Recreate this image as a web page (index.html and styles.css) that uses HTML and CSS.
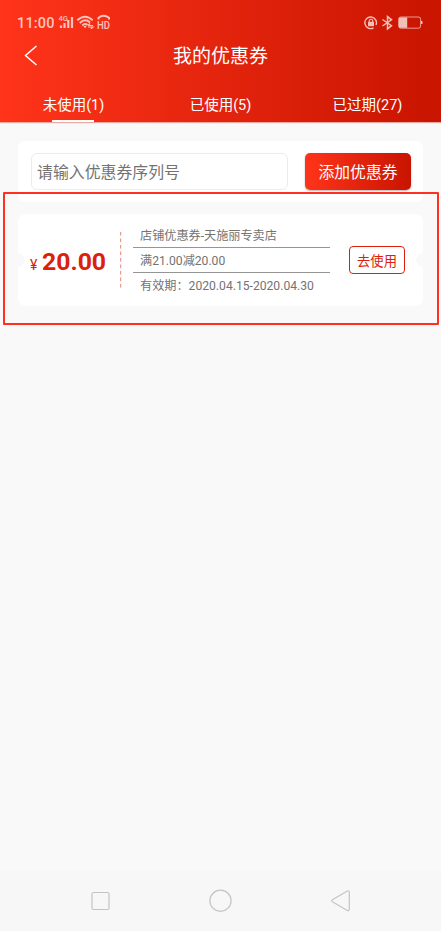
FILE: index.html
```html
<!DOCTYPE html>
<html lang="zh-CN">
<head>
<meta charset="utf-8">
<title>我的优惠券</title>
<link rel="stylesheet" href="styles.css">
</head>
<body>
<div class="screen">
  <header class="header">
    <div class="status">
      <span class="time">11:00</span>
      <svg class="signal" width="54" height="20" viewBox="0 0 54 20" fill="none" stroke="currentColor">
        <text class="network" x="0.500" y="8">4G</text>
        <path d="M3 15v-2.500M6.500 15v-5M10.300 15V7M14 15V4" stroke-width="2.200"/>
        <path d="M19.300 7.300Q27 0 34.700 7.300M21.800 10Q27 5 32 9.500M24.300 12.500Q27 9.500 29.500 12" stroke-width="1.900"/>
        <path d="M25.200 12.800h3.600L27 15.300z" fill="currentColor" stroke="none"/>
        <path d="M30 12.500h5M32 10.500l-2 2M30 14h5l-2 1.800" stroke-width="1.200"/>
        <path d="M40.500 6.500V4.800Q45.500.8 51 4.800v1.700" stroke-width="2"/>
        <text class="hd" x="39" y="15.800" textLength="13" lengthAdjust="spacingAndGlyphs">HD</text>
      </svg>
      <svg class="power" width="60" height="16" viewBox="0 0 60 16" fill="none" stroke="currentColor">
        <path d="M9.500 12.800A5.800 5.800 0 1 1 12 10" stroke-width="1.400"/>
        <path d="M4 6.800h6v4.400H4z" fill="currentColor" stroke="none"/>
        <path d="M5.300 7V5.300q1.700-2.200 3.400 0V7" stroke-width="1.100"/>
        <path d="M18.500 4.500l9 6.200-4 3.200V1.600l4 3.200-9 6.200" stroke-width="1.500"/>
        <rect x="34.600" y="2" width="22" height="11.200" rx="2.200" stroke-width=".8"/>
        <path d="M36.500 2.500h6.700v10.200h-6.700q-1.500 0-1.500-1.500V4q0-1.500 1.500-1.500z" fill="currentColor" stroke="none"/>
        <path d="M57.700 6v3" stroke-width="1.500"/>
      </svg>
    </div>
    <div class="titlebar">
      <svg class="back" width="14" height="22" viewBox="0 0 14 22"><path d="M12.500 1L1.500 10.500l11 9.500" fill="none" stroke="currentColor" stroke-width="1.500"/></svg>
      <h1 class="title">我的优惠券</h1>
    </div>
    <nav class="tabs">
      <a class="tab active">未使用(1)</a>
      <a class="tab">已使用(5)</a>
      <a class="tab">已过期(27)</a>
    </nav>
  </header>
  <main class="content">
    <section class="search">
      <div class="field">请输入优惠券序列号</div>
      <button class="add">添加优惠券</button>
    </section>
    <section class="coupon">
      <div class="amount"><span class="yen">¥</span><strong class="value">20.00</strong></div>
      <svg class="divider" width="2" height="56" viewBox="0 0 2 56"><path d="M.7 0v56" stroke="#e58477" stroke-width="1" stroke-dasharray="3.600 2.900"/></svg>
      <div class="details">
        <div class="line">店铺优惠券-天施丽专卖店</div>
        <div class="line">满21.00减20.00</div>
        <div class="line">有效期：2020.04.15-2020.04.30</div>
      </div>
      <button class="use">去使用</button>
    </section>
  </main>
  <footer class="navbar">
    <svg width="24" height="24" viewBox="0 0 24 24"><rect x="4" y="3.500" width="17" height="17" rx="1.500"/></svg>
    <svg width="24" height="24" viewBox="0 0 24 24"><circle cx="11.500" cy="11.700" r="10.600"/></svg>
    <svg width="24" height="24" viewBox="0 0 24 24"><path d="M3.400 10.700L18.300 2q2-.8 2 1.200v17q0 2-2 1.200L3.400 12.700q-1.500-1 0-2z"/></svg>
  </footer>
  <div class="highlight"></div>
</div>
</body>
</html>
```

FILE: styles.css
```css
* { box-sizing: border-box; }
body { margin: 0; background: #f9f9f9; font-family: Roboto, "Noto Sans CJK SC", sans-serif; }
button { font: inherit; margin: 0; padding: 0; }
.screen { position: relative; display: flex; flex-direction: column; width: 441px; height: 931px; overflow: hidden; }
.header { height: 122px; color: #fff; background: linear-gradient(90deg, #ff341a, #c81400); box-shadow: 0 1px 1px rgba(200, 20, 0, .35); }
.status { display: flex; align-items: center; height: 40px; padding: 6px 17px 0; color: rgba(255, 255, 255, .72); }
.time { width: 41px; padding-top: 1px; font-size: 14.500px; line-height: 18px; letter-spacing: .15px; font-weight: 500; }
.signal { margin-top: -1px; overflow: visible; }
.network { font-size: 7.500px; font-weight: 500; fill: currentColor; stroke: none; }
.hd { font-size: 11.500px; font-weight: 500; fill: currentColor; stroke: none; }
.power { margin-left: auto; margin-top: -1px; }
.titlebar { display: grid; grid-template-columns: 60px 1fr 60px; align-items: center; height: 32px; }
.back { margin-left: 24px; }
.title { margin: 0; padding-top: 2px; text-align: center; font-size: 19px; line-height: 28px; font-weight: 400; }
.tabs { display: grid; grid-template-columns: repeat(3, 1fr); height: 50px; }
.tab { display: flex; flex-direction: column; align-items: center; justify-content: space-between; padding-top: 23px; font-size: 14.500px; line-height: 21px; }
.active::after { content: ""; width: 42px; height: 2px; margin-right: 1px; background: #fff; }
.content { flex: 1; padding: 19px 18px 0; }
.search { display: flex; justify-content: space-between; height: 61px; padding: 12px 12px 12px 13px; background: #fff; border-radius: 7px; }
.field { width: 257px; height: 37px; padding-left: 5px; border: 1px solid #ececec; border-radius: 6px; color: #737373; font-size: 15.900px; line-height: 37px; }
.add { width: 106px; height: 37px; border: 0; border-radius: 5px; color: #fff; background: linear-gradient(90deg, #ff341a, #c81400); box-shadow: 0 1px 2px rgba(0, 0, 0, .3); font-size: 15.800px; }
.coupon { display: flex; align-items: center; height: 92px; margin-top: 12px; padding-left: 12px; border-radius: 7px; background: radial-gradient(circle at 0 50%, #f9f9f9 6.500px, transparent 7px), radial-gradient(circle at 100% 50%, #f9f9f9 6.500px, transparent 7px), #fff; }
.amount { display: flex; align-items: baseline; width: 90px; padding-top: 4px; color: #dc210a; }
.yen { width: 12px; padding-left: 0; font-size: 14px; }
.value { font-size: 24.800px; line-height: 34px; font-weight: 700; }
.divider { flex: none; margin-right: 11px; }
.details { width: 197px; color: #737373; font-size: 12.150px; }
.line { height: 25px; padding-left: 7px; line-height: 27px; white-space: nowrap; }
.line:first-child { height: 24px; }
.line + .line { border-top: 1px solid #959595; line-height: 26px; }
.line:last-child { height: 26px; }
.use { width: 56px; height: 28px; margin-left: 19px; border: 1px solid #dc210a; border-radius: 4px; background: #fff; color: #dc210a; font-size: 13.300px; }
.navbar { display: flex; justify-content: space-between; align-items: center; height: 60px; padding: 0 88px; background: #f7f7f7; }
.navbar svg { fill: none; stroke: #c4c4c4; stroke-width: 1.200; }
.highlight { position: absolute; left: 3px; top: 192px; width: 436px; height: 133px; border: 2px solid #ff3020; border-radius: 1px; pointer-events: none; }
```
